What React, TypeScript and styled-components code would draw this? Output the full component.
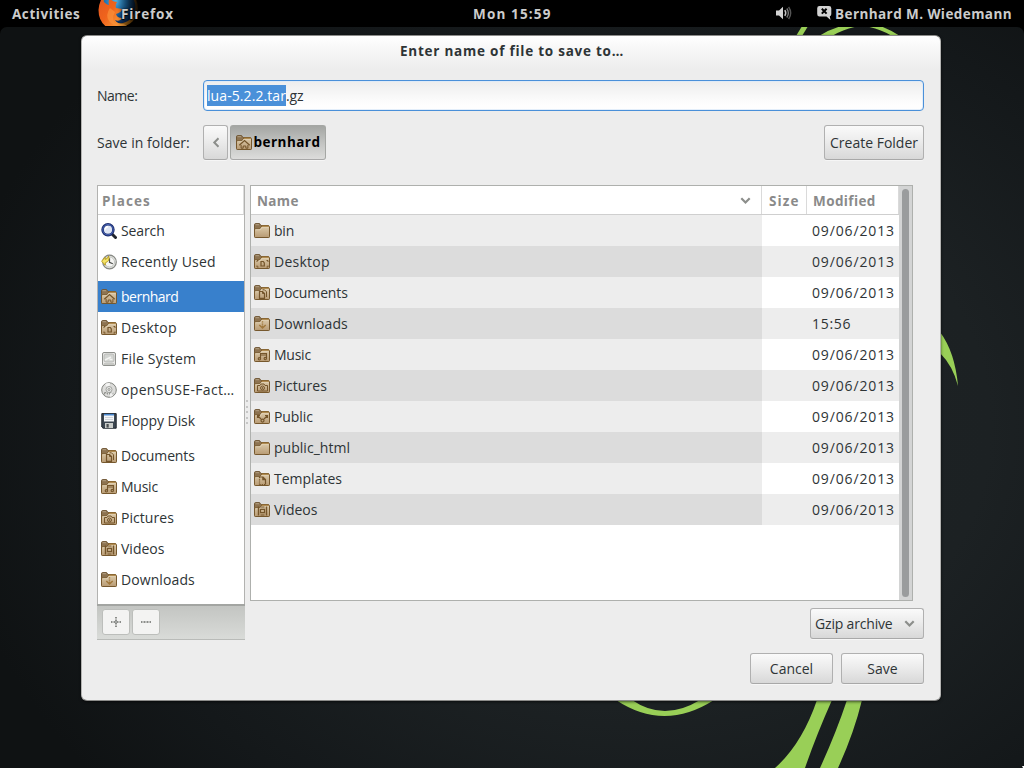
import React from 'react';
import styled, { createGlobalStyle } from 'styled-components';

const GlobalStyle = createGlobalStyle`
  * { box-sizing: border-box; }
  html, body { margin: 0; padding: 0; background: #000; overflow: hidden; }
  body { font: 14px/19px "Open Sans", "Noto Sans", sans-serif; color: #2e3436; }
  button { font: inherit; color: inherit; margin: 0; padding: 0; }
  svg { display: block; flex: none; }
`;

const Screen = styled.div`
  width: 1024px;
  height: 768px;
  display: flex;
  flex-direction: column;
  background: #000;
`;

const Label = styled.span<{ $track?: number }>`
  white-space: pre;
  letter-spacing: ${p => p.$track ?? 0}px;
`;

const BoldLabel = styled(Label)`
  font-weight: 700;
  font-size: 13.5px;
`;

/* Top bar */
const TopBar = styled.header`
  height: 27px;
  flex: none;
  display: grid;
  grid-template-columns: 473px auto 1fr;
  color: #cccccc;
  background: #000;
`;

const BarGroup = styled.div<{ $end?: boolean }>`
  display: flex;
  align-items: center;
  justify-content: ${p => (p.$end ? 'flex-end' : 'flex-start')};
  padding: ${p => (p.$end ? '1px 12px 0 0' : '1px 0 0')};
`;

const Activities = styled(BoldLabel)`
  width: 110px;
  padding-left: 12px;
`;

const AppMenu = styled.div`
  position: relative;
  display: flex;
  padding-left: 11px;
  text-shadow: 0 0 2px #000, 0 1px 1px #000;
`;

const AppIcon = styled.div`
  position: absolute;
  left: -12px;
  top: -5px;
  height: 26px;
  overflow: hidden;
`;

const AppName = styled(BoldLabel)`
  position: relative;
`;

const VolumeSlot = styled.div`
  margin: -3px 25px 0 0;
`;

const ChatSlot = styled.div`
  margin: -3px 3px 0 0;
`;

/* Desktop */
const Desktop = styled.main`
  position: relative;
  flex: 1;
  overflow: hidden;
  border-radius: 7px 7px 0 0;
  padding: 8px 0 0 81px;
  background: radial-gradient(ellipse 700px 560px at 640px 400px, #1e2426 0%, #1c2123 50%, #14181a 80%, #0f1213 100%);
`;

const Wallpaper = styled.svg`
  position: absolute;
  left: 0;
  top: 0;
`;

/* Dialog */
const Dialog = styled.section`
  position: relative;
  width: 860px;
  height: 666px;
  border: 1px solid #9a9a98;
  border-color: #8c8c8a #b4b4b2 #8c8c8a #b4b4b2;
  border-radius: 6px;
  padding: 0 16px 0 15px;
  display: flex;
  flex-direction: column;
  background: linear-gradient(#ffffff, #f9f9f9 10px, #ededed 34px);
  box-shadow: 0 1px 3px rgba(0, 0, 0, 0.6);
`;

const DialogTitle = styled.h1`
  margin: 0;
  height: 44px;
  padding: 6px 0 0 303px;
  font-size: 13.5px;
  line-height: 19px;
`;

const FormRow = styled.div<{ $h: number; $mt?: number }>`
  display: flex;
  align-items: center;
  height: ${p => p.$h}px;
  margin-top: ${p => p.$mt ?? 0}px;
`;

const FieldName = styled.label`
  width: 106px;
  flex: none;
  display: flex;
`;

const NameInput = styled.div`
  flex: 1;
  height: 31px;
  display: flex;
  align-items: center;
  padding: 0 3px;
  border: 1px solid #4a90d9;
  border-radius: 4px;
  background: linear-gradient(#ededed, #fdfdfd 75%, #ffffff);
  box-shadow: inset 0 0 0 1px rgba(220, 234, 249, 0.8);
`;

const Selection = styled.span`
  height: 21px;
  width: 79px;
  line-height: 21px;
  background: #4a90d9;
  color: #fff;
  display: flex;
`;

const Button = styled.button<{ $w: number; $h?: number; $pressed?: boolean }>`
  width: ${p => p.$w}px;
  height: ${p => p.$h ?? 31}px;
  flex: none;
  display: flex;
  align-items: center;
  justify-content: center;
  border: 1px solid ${p => (p.$pressed ? '#a5a7a4' : '#b0b0b0')};
  border-bottom-color: #a8a8a8;
  border-radius: 3px;
  background: ${p =>
    p.$pressed
      ? 'linear-gradient(#a4a6a3, #c2c3c1 50%, #dcdcdb)'
      : 'linear-gradient(#fafafa, #ececec 45%, #d8d8d8)'};
  box-shadow: 0 1px 0 rgba(255, 255, 255, 0.5);
`;

const PathButton = styled(Button)`
  margin-left: 2px;
  color: #000;
  gap: 2px;
`;

const CreateButton = styled(Button)`
  margin-left: auto;
`;

const Panels = styled.div`
  display: flex;
  margin-top: 25px;
  height: 455px;
  gap: 5px;
  position: relative;
`;

/* Places */
const Sidebar = styled.aside`
  width: 148px;
  flex: none;
  display: flex;
  flex-direction: column;
`;

const PlacesBox = styled.div`
  height: 419px;
  border: 1px solid #b2b2b0;
  border-bottom: 0;
  background: #fff;
`;

const PlacesHeader = styled.div`
  height: 29px;
  display: flex;
  align-items: center;
  padding: 2px 0 0 4px;
  color: #8a8a8a;
  border-bottom: 1px solid #cfcfcf;
  border-right: 1px solid #dcdcdc;
`;

const PlaceRow = styled.div<{ $gap?: boolean; $active?: boolean }>`
  height: 31px;
  margin-top: ${p => (p.$gap ? 4 : 0)}px;
  display: flex;
  align-items: center;
  gap: 4px;
  padding-left: 3px;
  color: ${p => (p.$active ? '#fff' : '#2e3436')};
  background: ${p => (p.$active ? '#3880cc' : 'transparent')};
`;

const PlacesToolbar = styled.div`
  height: 36px;
  display: flex;
  gap: 2px;
  padding: 4px 0 0 5px;
  border-top: 2px solid #a3a5a2;
  border-bottom: 1px solid #b9bbb8;
  background: linear-gradient(#c3c5c2, #d9dbd8);
`;

const SmallButton = styled.button`
  width: 28px;
  height: 26px;
  margin-top: -1px;
  display: flex;
  align-items: center;
  justify-content: center;
  border: 1px solid #bcbebb;
  border-radius: 3px;
  background: #f3f3f2;
`;

const Splitter = styled.div`
  position: absolute;
  left: 149px;
  top: 215px;
  display: flex;
  flex-direction: column;
  gap: 3.5px;
`;

const SplitterDot = styled.i`
  width: 2px;
  height: 2px;
  background: #c6c6c6;
`;

/* Files */
const FilesColumn = styled.div`
  flex: 1;
  display: flex;
  flex-direction: column;
`;

const FilesBox = styled.div`
  width: 663px;
  height: 416px;
  display: flex;
  border: 1px solid #aeb0ad;
  background: #fff;
`;

const FileTable = styled.div`
  width: 648px;
`;

const HeaderLine = styled.div`
  height: 29px;
  display: grid;
  grid-template-columns: 511px 45px 92px;
  color: #8a8a8a;
  border-bottom: 1px solid #cfcfcf;
`;

const HeaderCell = styled.div<{ $pad: number }>`
  display: flex;
  align-items: center;
  justify-content: space-between;
  padding: 2px 10px 0 ${p => p.$pad}px;
  border-right: 1px solid #dadada;
`;

const FileRow = styled.div<{ $odd: boolean }>`
  height: 31px;
  display: grid;
  grid-template-columns: 511px 1fr;
  background: ${p => (p.$odd ? '#ededed' : '#ffffff')};
`;

const NameCell = styled.div<{ $odd: boolean }>`
  display: flex;
  align-items: center;
  gap: 4px;
  padding-left: 3px;
  background: ${p => (p.$odd ? '#dcdcdc' : '#ededed')};
`;

const DateCell = styled.div`
  display: flex;
  align-items: center;
  padding-left: 50px;
`;

const ScrollTrack = styled.div`
  width: 13px;
  padding: 3px 3px 3px 3px;
  background: #d3d4d4;
`;

const ScrollThumb = styled.div`
  width: 7px;
  height: 408px;
  border-radius: 4px;
  background: #9a9c9d;
`;

const FilterButton = styled(Button)`
  margin-top: 7px;
  align-self: flex-end;
  justify-content: space-between;
  padding: 0 8px 0 4px;
`;

const Actions = styled.footer`
  display: flex;
  justify-content: flex-end;
  gap: 8px;
  margin-top: 13px;
`;

type Emblem =
  | 'none' | 'home' | 'desktop' | 'documents' | 'downloads'
  | 'music' | 'pictures' | 'public' | 'templates' | 'videos';

const INK = '#74552b';

function EmblemShape({ kind }: { kind: Emblem }) {
  switch (kind) {
    case 'home':
      return (
        <g fill="none" stroke={INK}>
          <path d="M3.3 10.3 8.5 5.6l5.2 4.7" strokeWidth="1.3" />
          <path d="M5.1 10v3.2h2.1V11h2.6v2.2h2.1V10" />
        </g>
      );
    case 'desktop':
      return (
        <g fill="none" stroke={INK}>
          <path d="M3 8V6.500h1.500M3 11.500V13h1.500M14 8V6.500h-1.500M14 11.500V13h-1.500" />
          <path d="M7 7.500h2.300l1 1.500v3H7z" strokeWidth="1.200" />
        </g>
      );
    case 'documents':
      return (
        <g fill="none" stroke={INK}>
          <path d="M5.500 6.500h3l2 2v4.800h-5z" strokeWidth="1.200" />
          <path d="M8.500 6.500v2h2M8.500 4.800h2l2 2V12" />
        </g>
      );
    case 'downloads':
      return (
        <g fill="none" stroke="#a0783c">
          <path d="M5.300 9l3.200 3 3.200-3" strokeWidth="1.500" />
          <path d="M8.500 5.300v1.200M8.500 7.500v1.200M8.500 9.500v1.500" strokeWidth="1.400" />
        </g>
      );
    case 'music':
      return (
        <g fill="none" stroke={INK} strokeWidth="1.100">
          <path d="M6.500 11.500V6.500h6v4.800M6.500 8h6" />
          <circle cx="5.400" cy="11.800" r="1.200" />
          <circle cx="11.300" cy="11.600" r="1.200" />
        </g>
      );
    case 'pictures':
      return (
        <g fill="none" stroke={INK}>
          <path d="M3.500 7.500H6l1-1.500h3l1 1.500h2.500V13h-10z" />
          <circle cx="8.500" cy="10" r="2" />
          <circle cx="8.500" cy="10" r=".5" />
        </g>
      );
    case 'public':
      return (
        <g fill="none" stroke={INK} strokeWidth="1.200">
          <path d="M3.500 9V6.500h2.500M13.500 9V6.500H11M4 7l3 3M13 7l-3 3" />
          <circle cx="8.500" cy="11.600" r="1.500" />
        </g>
      );
    case 'templates':
      return (
        <g fill="none" stroke={INK} strokeWidth="1.200">
          <path d="M5.500 6v7.500" strokeDasharray="1.200 1" />
          <path d="M5.500 13.500h6" strokeDasharray="1.200 1" />
          <path d="M5.500 6h3.500l2.500 2.500v5M8.800 6v2.700h2.700" />
        </g>
      );
    case 'videos':
      return (
        <g fill="none" stroke={INK}>
          <path d="M4.500 4.500v9M12.500 4.500v9" strokeWidth="1.400" />
          <path d="M6.500 5h4M6.500 13h4" />
          <path d="M6.500 7.300h4v3.400h-4z" strokeWidth="1.200" />
        </g>
      );
    default:
      return null;
  }
}

function FolderIcon({ kind }: { kind: Emblem }) {
  return (
    <svg width="16" height="16" viewBox="0 0 16 16">
      <defs>
        <linearGradient id="folderFront" x1="0" y1="0" x2="0" y2="1">
          <stop offset="0" stopColor="#dccbab" />
          <stop offset="1" stopColor="#b89b74" />
        </linearGradient>
      </defs>
      <path d="M.5 13V1.800Q.5.600 1.700.600h3.600q.7 0 1 .8L7 2.600H14.500V8H.5z" fill="#8d7350" stroke="#6f5634" />
      <path d="M1.500 1.700h3.600" stroke="#b3a084" />
      <path d="M.5 5.800h5.300l2-2.700h7q.7 0 .7.700v10q0 .700-.7.700H1.200q-.7 0-.7-.7z" fill="url(#folderFront)" stroke="#76582d" />
      <path d="M1.500 6.700h4.700l2-2.700h6.300" fill="none" stroke="#ecdfc6" strokeOpacity=".7" />
      <path d="M7.500 3.100h7.300" stroke="#a97b31" />
      <EmblemShape kind={kind} />
    </svg>
  );
}

function SearchIcon() {
  return (
    <svg width="16" height="16" viewBox="0 0 16 16">
      <path d="M10.500 10.500l4 4" stroke="#20242c" strokeWidth="3" strokeLinecap="round" />
      <circle cx="7" cy="6.700" r="5.400" fill="#dfe6f4" stroke="#1d2e6f" strokeWidth="2.600" />
      <circle cx="7" cy="6.700" r="5.200" fill="none" stroke="#4a68b8" strokeWidth="1" />
      <path d="M4.200 6.500A2.800 2.800 0 0 1 7 3.800" fill="none" stroke="#fff" strokeWidth="1.500" />
    </svg>
  );
}

function RecentIcon() {
  return (
    <svg width="16" height="16" viewBox="0 0 16 16">
      <circle cx="8.500" cy="8" r="6.800" fill="#e4e5e2" stroke="#868883" strokeWidth="1.200" />
      <circle cx="8.500" cy="8" r="5" fill="#f5f5f3" stroke="#b8bab5" strokeWidth=".8" />
      <path d="M8.500 4.200V8.300l3.300 1.400" fill="none" stroke="#4b4d49" strokeWidth="1.200" />
      <path d="M.6 7.200 4.200 3.200v2.200Q6.800 5 7.600 2 9.500 6.800 4.300 8.800v2.400z" fill="#f5e468" stroke="#b79a16" strokeWidth=".9" />
    </svg>
  );
}

function DriveIcon() {
  return (
    <svg width="16" height="16" viewBox="0 0 16 16">
      <rect x="1.500" y="1.500" width="13" height="13" rx="1.500" fill="#e8e8e6" stroke="#8f918d" />
      <rect x="3" y="3" width="10" height="8" rx="2" fill="#d2d4d1" stroke="#b3b5b1" strokeWidth=".8" />
      <path d="M4 9l6-3M8.500 8.500h3" stroke="#f4f4f2" strokeWidth="1.400" />
      <path d="M3 13h10" stroke="#b0b2ae" strokeWidth="1.200" />
    </svg>
  );
}

function DiscIcon() {
  return (
    <svg width="16" height="16" viewBox="0 0 16 16">
      <circle cx="8" cy="8" r="7.300" fill="#dcdcda" stroke="#82847f" />
      <path d="M8 8 4 2a7 7 0 0 1 5-1z" fill="#f4f4f3" />
      <path d="M8 8l5.500 3.500A7 7 0 0 1 9 15z" fill="#f1f1f0" />
      <circle cx="8" cy="7.500" r="3" fill="#e9e9e8" stroke="#9b9d99" strokeWidth=".9" />
      <circle cx="8" cy="7.500" r="1" fill="#fff" stroke="#7c7e79" strokeWidth=".8" />
      <path d="M3.500 12.500v-2h1.500v1.200M6.500 12.500v-1.800M8.500 12.500v-1.800h2M12 12.500v-1.800" fill="none" stroke="#8a8c88" strokeWidth=".9" />
    </svg>
  );
}

function FloppyIcon() {
  return (
    <svg width="16" height="16" viewBox="0 0 16 16">
      <path d="M.8.600h14.400v14.600H2L.8 14z" fill="#3c4650" stroke="#1f262d" />
      <rect x="3" y="1" width="10" height="7.500" fill="#f4f6f8" />
      <path d="M3 1.700h10" stroke="#4a88cf" strokeWidth="1.600" />
      <path d="M4 4.500h8M4 6.500h8" stroke="#c6cbd0" strokeWidth=".8" />
      <rect x="4" y="10" width="8" height="5" fill="#c9ccc9" />
      <rect x="5.500" y="11" width="2.200" height="3.600" fill="#4a4f52" />
    </svg>
  );
}

function ChevronDown() {
  return (
    <svg width="11" height="8" viewBox="0 0 11 8">
      <path d="M1.300 1.300l4.200 4.200 4.200-4.200" fill="none" stroke="#8c8e8b" strokeWidth="2.200" />
    </svg>
  );
}

function FirefoxIcon() {
  return (
    <svg width="42" height="26" viewBox="0 0 42 26">
      <defs>
        <radialGradient id="globe" cx=".4" cy=".3" r=".7">
          <stop offset="0" stopColor="#4fb0e0" />
          <stop offset=".5" stopColor="#1c6fb0" />
          <stop offset="1" stopColor="#0b2c5c" />
        </radialGradient>
        <linearGradient id="fox" x1="0" y1="0" x2=".9" y2=".6">
          <stop offset="0" stopColor="#e2571f" />
          <stop offset=".5" stopColor="#f0641c" />
          <stop offset="1" stopColor="#f9a13a" />
        </linearGradient>
        <linearGradient id="fade" x1="0" y1="0" x2="1" y2="0">
          <stop offset=".45" stopColor="#000" stopOpacity="0" />
          <stop offset="1" stopColor="#000" />
        </linearGradient>
      </defs>
      <circle cx="21" cy="8" r="19" fill="#c77a16" />
      <circle cx="21" cy="7" r="16.500" fill="url(#globe)" />
      <path d="M4-2Q1 3 .5 10 .500 22 10 28h24q-4-1-8-4-7 0-9-4 5 2 7-2-5 0-6-4 6-2 6-5l-6-1q-1-3 1-6-5 0-7-4-2 3-1 7Q6 4 4-2z" fill="url(#fox)" />
      <path d="M12 8q-5 7-1 13 3 4 9 5-8-6-3-14z" fill="#f9913a" opacity=".7" />
      <rect width="42" height="26" fill="url(#fade)" />
    </svg>
  );
}

function VolumeIcon() {
  return (
    <svg width="16" height="14" viewBox="0 0 16 14">
      <path d="M0 4.500h3L7 .800v12.400L3 9.500H0z" fill="#d3d3d3" />
      <path d="M8.800 4.200q1.900 2.800 0 5.600" fill="none" stroke="#c4c4c4" strokeWidth="1.500" />
      <path d="M10.800 2.500q3.200 4.500 0 9" fill="none" stroke="#777" strokeWidth="1.400" />
      <path d="M12.600 1q4.200 6 0 12" fill="none" stroke="#555" strokeWidth="1.400" />
    </svg>
  );
}

function ChatIcon() {
  return (
    <svg width="15" height="14" viewBox="0 0 15 14">
      <path d="M2.500 0h9.500q2.300 0 2.300 2.300V8q0 1.700-1.500 2.200L13.500 14l-4-3.500h-7Q.2 10.500.2 8V2.300Q.2 0 2.500 0z" fill="#d3d3d3" />
      <path d="M4.800 2.800l4.800 4.800M9.600 2.800 4.800 7.600" stroke="#000" strokeWidth="2" />
    </svg>
  );
}

interface Place {
  name: string;
  icon: React.ReactNode;
  track: number;
  gap?: boolean;
  active?: boolean;
}

const places: Place[] = [
  { name: 'Search', icon: <SearchIcon />, track: -0.11 },
  { name: 'Recently Used', icon: <RecentIcon />, track: 0.2 },
  { name: 'bernhard', icon: <FolderIcon kind="home" />, track: -0.5, gap: true, active: true },
  { name: 'Desktop', icon: <FolderIcon kind="desktop" />, track: 0.25 },
  { name: 'File System', icon: <DriveIcon />, track: 0.2 },
  { name: 'openSUSE-Fact…', icon: <DiscIcon />, track: 0.33 },
  { name: 'Floppy Disk', icon: <FloppyIcon />, track: -0.06 },
  { name: 'Documents', icon: <FolderIcon kind="documents" />, track: -0.14, gap: true },
  { name: 'Music', icon: <FolderIcon kind="music" />, track: -0.25 },
  { name: 'Pictures', icon: <FolderIcon kind="pictures" />, track: 0.05 },
  { name: 'Videos', icon: <FolderIcon kind="videos" />, track: 0 },
  { name: 'Downloads', icon: <FolderIcon kind="downloads" />, track: 0.09 },
];

const files: { name: string; kind: Emblem; modified: string; track: number }[] = [
  { name: 'bin', kind: 'none', modified: '09/06/2013', track: -0.2 },
  { name: 'Desktop', kind: 'desktop', modified: '09/06/2013', track: 0.25 },
  { name: 'Documents', kind: 'documents', modified: '09/06/2013', track: -0.14 },
  { name: 'Downloads', kind: 'downloads', modified: '15:56', track: 0.09 },
  { name: 'Music', kind: 'music', modified: '09/06/2013', track: -0.25 },
  { name: 'Pictures', kind: 'pictures', modified: '09/06/2013', track: 0.05 },
  { name: 'Public', kind: 'public', modified: '09/06/2013', track: -0.09 },
  { name: 'public_html', kind: 'none', modified: '09/06/2013', track: 0.03 },
  { name: 'Templates', kind: 'templates', modified: '09/06/2013', track: 0 },
  { name: 'Videos', kind: 'videos', modified: '09/06/2013', track: 0 },
];

export default function App() {
  return (
    <Screen>
      <GlobalStyle />
      <TopBar>
        <BarGroup>
          <Activities $track={0.56}>Activities</Activities>
          <AppMenu>
            <AppIcon><FirefoxIcon /></AppIcon>
            <AppName $track={0.85}>Firefox</AppName>
          </AppMenu>
        </BarGroup>
        <BarGroup>
          <BoldLabel $track={1.15}>Mon 15:59</BoldLabel>
        </BarGroup>
        <BarGroup $end>
          <VolumeSlot><VolumeIcon /></VolumeSlot>
          <ChatSlot><ChatIcon /></ChatSlot>
          <BoldLabel $track={0.42}>Bernhard M. Wiedemann</BoldLabel>
        </BarGroup>
      </TopBar>

      <Desktop>
        <Wallpaper width="1024" height="741" viewBox="0 27 1024 741">
          <g fill="#99cf57">
            <path d="M801.500 27h6L802 36h-6z" />
            <path d="M819 36q15-10 38-13 20-2 43 13h-8q-15-9-30-10-15 1-30 10z" />
            <path d="M940 332q15 20 18 54-5-20-18-33z" />
            <path d="M616 700q48 32 98 0h-14q-36 22-68 0z" />
            <path d="M817 700h15q-16 36-27 68h-30q27-24 42-68z" />
            <path d="M847 700h15q-8 33-24 68h-18q16-35 27-68z" />
          </g>
          <path d="M1022 766h2v2h-1z" fill="#fff" />
        </Wallpaper>

        <Dialog>
          <DialogTitle><BoldLabel $track={0.76}>Enter name of file to save to…</BoldLabel></DialogTitle>
          <FormRow $h={31}>
            <FieldName><Label $track={-0.5}>Name:</Label></FieldName>
            <NameInput>
              <Selection><Label $track={0.08}>lua-5.2.2.tar</Label></Selection>
              <Label $track={-0.1}>.gz</Label>
            </NameInput>
          </FormRow>
          <FormRow $h={35} $mt={14}>
            <FieldName><Label $track={0.04}>Save in folder:</Label></FieldName>
            <Button $w={25} $h={35}>
              <svg width="8" height="11" viewBox="0 0 8 11">
                <path d="M6.500 1.300 2.300 5.500l4.200 4.200" fill="none" stroke="#8c8e8b" strokeWidth="2" />
              </svg>
            </Button>
            <PathButton $w={96} $h={35} $pressed>
              <FolderIcon kind="home" />
              <BoldLabel $track={0.45}>bernhard</BoldLabel>
            </PathButton>
            <CreateButton $w={100} $h={35}><Label>Create Folder</Label></CreateButton>
          </FormRow>

          <Panels>
            <Sidebar>
              <PlacesBox>
                <PlacesHeader><BoldLabel $track={1.08}>Places</BoldLabel></PlacesHeader>
                {places.map(p => (
                  <PlaceRow key={p.name} $gap={p.gap} $active={p.active}>
                    {p.icon}
                    <Label $track={p.track}>{p.name}</Label>
                  </PlaceRow>
                ))}
              </PlacesBox>
              <PlacesToolbar>
                <SmallButton>
                  <svg width="12" height="12" viewBox="0 0 12 12">
                    <path d="M1 6h10M6 1v10" stroke="#8b8d8a" strokeWidth="2" strokeDasharray="1 .5" />
                  </svg>
                </SmallButton>
                <SmallButton>
                  <svg width="12" height="12" viewBox="0 0 12 12">
                    <path d="M1 6h10" stroke="#8b8d8a" strokeWidth="2" strokeDasharray="1 .5" />
                  </svg>
                </SmallButton>
              </PlacesToolbar>
            </Sidebar>
            <Splitter>
              {[0, 1, 2, 3, 4].map(i => <SplitterDot key={i} />)}
            </Splitter>
            <FilesColumn>
              <FilesBox>
                <FileTable>
                  <HeaderLine>
                    <HeaderCell $pad={6}><BoldLabel $track={0.35}>Name</BoldLabel><ChevronDown /></HeaderCell>
                    <HeaderCell $pad={7}><BoldLabel $track={1.15}>Size</BoldLabel></HeaderCell>
                    <HeaderCell $pad={6}><BoldLabel $track={0.4}>Modified</BoldLabel></HeaderCell>
                  </HeaderLine>
                  {files.map((f, i) => (
                    <FileRow key={f.name} $odd={i % 2 === 1}>
                      <NameCell $odd={i % 2 === 1}>
                        <FolderIcon kind={f.kind} />
                        <Label $track={f.track}>{f.name}</Label>
                      </NameCell>
                      <DateCell>
                        <Label $track={f.modified.length > 5 ? 0.86 : 0.7}>{f.modified}</Label>
                      </DateCell>
                    </FileRow>
                  ))}
                </FileTable>
                <ScrollTrack><ScrollThumb /></ScrollTrack>
              </FilesBox>
              <FilterButton $w={114}><Label $track={-0.18}>Gzip archive</Label><ChevronDown /></FilterButton>
            </FilesColumn>
          </Panels>

          <Actions>
            <Button $w={83}><Label>Cancel</Label></Button>
            <Button $w={83}><Label>Save</Label></Button>
          </Actions>
        </Dialog>
      </Desktop>
    </Screen>
  );
}
